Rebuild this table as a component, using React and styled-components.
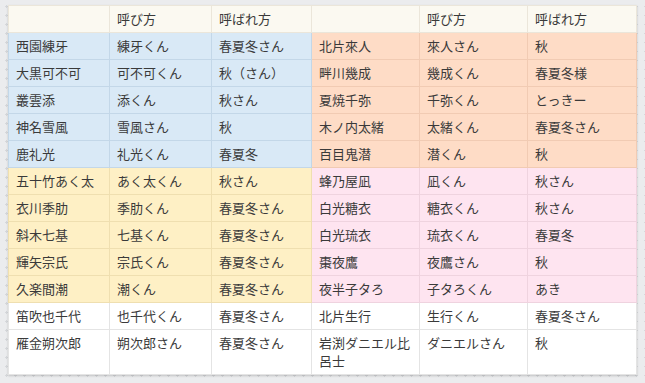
import styled, { createGlobalStyle } from "styled-components";

const GlobalStyle = createGlobalStyle`
  html, body {
    margin: 0;
    padding: 0;
  }
  body {
    background-color: #ebecee;
    background-image: radial-gradient(#d6d8db 1px, transparent 1.2px);
    background-size: 9px 9px;
    background-position: 2px 2px;
    font-family: "Noto Sans CJK JP", "Noto Sans", sans-serif;
    color: #3a3a3a;
  }
`;

const tones = {
  head: { bg: "#fbf9f1", line: "#ebe6da" },
  blue: { bg: "#d9e9f6", line: "#c3d7e8" },
  peach: { bg: "#fedcc6", line: "#f1cbb3" },
  yellow: { bg: "#fef0c5", line: "#efdfb0" },
  pink: { bg: "#fee4f0", line: "#efd3df" },
  white: { bg: "#ffffff", line: "#e4e4e4" },
};

const Page = styled.div`
  padding: 5px 9px 10px 8px;
`;

const Table = styled.table`
  width: 628px;
  table-layout: fixed;
  border-collapse: collapse;
  background: #fff;
  box-shadow: 0 1px 2px rgba(0, 0, 0, 0.18);
  font-size: 13px;
  line-height: 18px;
`;

const Cell = styled.td`
  padding: 4px 7px;
  background: ${(p) => tones[p.$tone].bg};
  border: 1px solid ${(p) => tones[p.$tone].line};
  vertical-align: top;
  text-align: left;
  font-weight: 400;
  word-break: break-all;
`;

const widths = [101, 102, 100, 108, 108, 109];

const rows = [
  [["西園練牙", "練牙くん", "春夏冬さん"], ["北片來人", "來人さん", "秋"], "blue", "peach"],
  [["大黒可不可", "可不可くん", "秋（さん）"], ["畔川幾成", "幾成くん", "春夏冬様"], "blue", "peach"],
  [["叢雲添", "添くん", "秋さん"], ["夏焼千弥", "千弥くん", "とっきー"], "blue", "peach"],
  [["神名雪風", "雪風さん", "秋"], ["木ノ内太緒", "太緒くん", "春夏冬さん"], "blue", "peach"],
  [["鹿礼光", "礼光くん", "春夏冬"], ["百目鬼潜", "潜くん", "秋"], "blue", "peach"],
  [["五十竹あく太", "あく太くん", "秋さん"], ["蜂乃屋凪", "凪くん", "秋さん"], "yellow", "pink"],
  [["衣川季肋", "季肋くん", "春夏冬さん"], ["白光糖衣", "糖衣くん", "秋さん"], "yellow", "pink"],
  [["斜木七基", "七基くん", "春夏冬さん"], ["白光琉衣", "琉衣くん", "春夏冬"], "yellow", "pink"],
  [["輝矢宗氏", "宗氏くん", "春夏冬さん"], ["棗夜鷹", "夜鷹さん", "秋"], "yellow", "pink"],
  [["久楽間潮", "潮くん", "春夏冬さん"], ["夜半子タろ", "子タろくん", "あき"], "yellow", "pink"],
  [["笛吹也千代", "也千代くん", "春夏冬さん"], ["北片生行", "生行くん", "春夏冬さん"], "white", "white"],
  [["雁金朔次郎", "朔次郎さん", "春夏冬さん"], ["岩渕ダニエル比呂士", "ダニエルさん", "秋"], "white", "white"],
];

const header = ["", "呼び方", "呼ばれ方", "", "呼び方", "呼ばれ方"];

export default function App() {
  return (
    <Page>
      <GlobalStyle />
      <Table>
        <colgroup>
          {widths.map((w, i) => (
            <col key={i} style={{ width: w }} />
          ))}
        </colgroup>
        <thead>
          <tr>
            {header.map((h, i) => (
              <Cell as="th" key={i} $tone="head">
                {h}
              </Cell>
            ))}
          </tr>
        </thead>
        <tbody>
          {rows.map(([left, right, lt, rt], r) => (
            <tr key={r}>
              {left.map((t, i) => (
                <Cell key={"l" + i} $tone={lt}>
                  {t}
                </Cell>
              ))}
              {right.map((t, i) => (
                <Cell key={"r" + i} $tone={rt}>
                  {t}
                </Cell>
              ))}
            </tr>
          ))}
        </tbody>
      </Table>
    </Page>
  );
}
